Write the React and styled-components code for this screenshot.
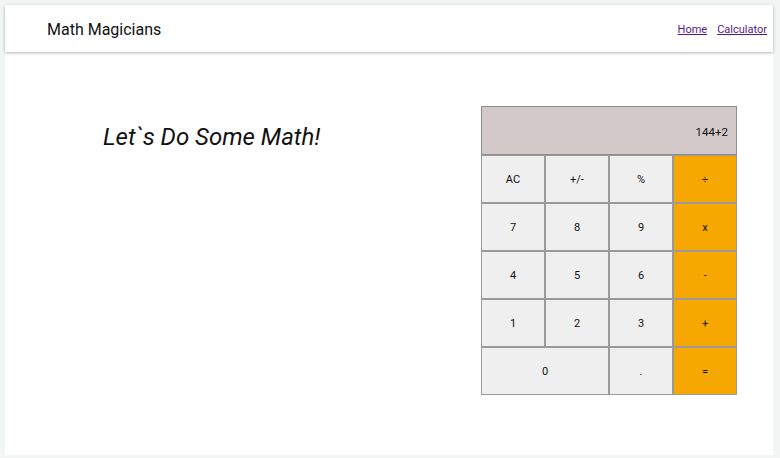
import styled, { createGlobalStyle } from "styled-components";

const GlobalStyle = createGlobalStyle`
  body {
    margin: 0;
    padding: 5px;
    background: #f3f4f4;
    font-family: Roboto, "Liberation Sans", sans-serif;
  }
`;

const Page = styled.div`
  width: 768px;
  height: 450px;
  background: #fff;
  display: flex;
  flex-direction: column;
`;

const Header = styled.header`
  height: 47px;
  display: flex;
  align-items: center;
  justify-content: space-between;
  padding: 2px 6px 0 42px;
  box-sizing: border-box;
  box-shadow: 0 1px 3px rgba(0, 0, 0, 0.3);
  position: relative;
`;

const Logo = styled.h1`
  margin: 0;
  font-size: 16px;
  font-weight: 400;
  color: #111;
`;

const Nav = styled.nav`
  display: flex;
  gap: 10px;
  font-size: 11px;

  a {
    color: #551a8b;
  }
`;

const Main = styled.main`
  display: flex;
  justify-content: space-between;
  align-items: flex-start;
  padding: 54px 36px 0 98px;
`;

const Title = styled.h2`
  margin: 17px 0 0;
  font-size: 24px;
  font-weight: 400;
  font-style: italic;
  color: #111;
`;

const Calculator = styled.div`
  display: grid;
  grid-template-columns: repeat(4, 64px);
  grid-template-rows: 49px repeat(5, 48px);
`;

const Screen = styled.div`
  grid-column: span 4;
  background: #d4c9c9;
  border: 1px solid #8e8e8e;
  display: flex;
  align-items: center;
  justify-content: flex-end;
  padding: 2px 8px 0 0;
  font-size: 11.5px;
  color: #111;
`;

const Key = styled.button`
  grid-column: span ${(p) => p.$span || 1};
  background: ${(p) => (p.$op ? "#f6a800" : "#efefef")};
  border: 1px solid #9a9a9a;
  margin: 0;
  padding: 0;
  font-family: Roboto, "Liberation Sans", sans-serif;
  font-size: 11px;
  color: #111;
`;

const keys = [
  ["AC"], ["+/-"], ["%"], ["÷", true],
  ["7"], ["8"], ["9"], ["x", true],
  ["4"], ["5"], ["6"], ["-", true],
  ["1"], ["2"], ["3"], ["+", true],
  ["0", false, 2], ["."], ["=", true],
];

export default function App() {
  return (
    <>
      <GlobalStyle />
      <Page>
        <Header>
          <Logo>Math Magicians</Logo>
          <Nav>
            <a href="#home">Home</a>
            <a href="#calculator">Calculator</a>
          </Nav>
        </Header>
        <Main>
          <Title>Let`s Do Some Math!</Title>
          <Calculator>
            <Screen>144+2</Screen>
            {keys.map(([label, op, span]) => (
              <Key key={label} $op={op} $span={span}>
                {label}
              </Key>
            ))}
          </Calculator>
        </Main>
      </Page>
    </>
  );
}
